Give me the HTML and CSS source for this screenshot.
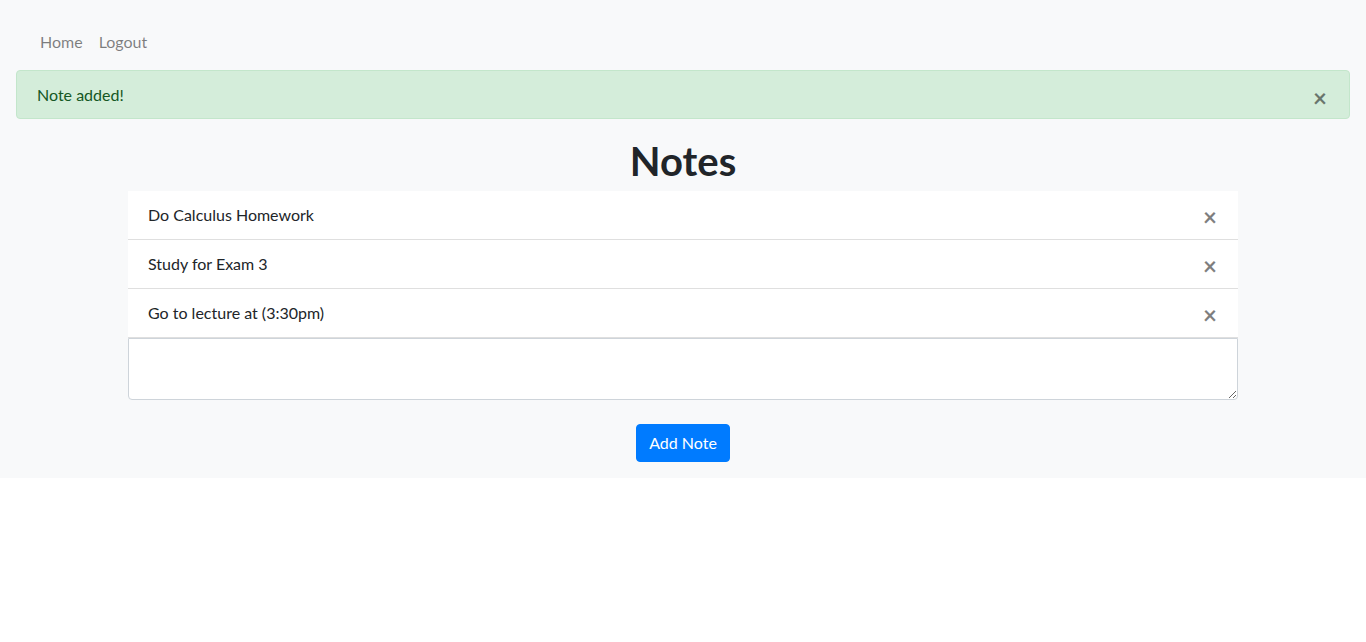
FILE: index.html
```html
<!DOCTYPE html>
<html lang="en">
<head>
<meta charset="utf-8">
<title>Notes</title>
<link rel="stylesheet" href="styles.css">
</head>
<body>
<div class="page">
  <nav class="navbar">
    <a class="nav-link" href="#">Home</a>
    <a class="nav-link" href="#">Logout</a>
  </nav>
  <div class="alert">
    <span>Note added!</span>
    <button class="close alert-close" type="button">&times;</button>
  </div>
  <main class="container">
    <h1 class="title">Notes</h1>
    <ul class="list">
      <li class="item"><span>Do Calculus Homework</span><button class="close" type="button">&times;</button></li>
      <li class="item"><span>Study for Exam 3</span><button class="close" type="button">&times;</button></li>
      <li class="item"><span>Go to lecture at (3:30pm)</span><button class="close" type="button">&times;</button></li>
    </ul>
    <textarea class="note-input" rows="2"></textarea>
    <div class="actions">
      <button class="btn" type="button">Add Note</button>
    </div>
  </main>
</div>
</body>
</html>
```
FILE: styles.css
```css
* { box-sizing: border-box; }
html, body { margin: 0; padding: 0; }
body {
  font-family: "Segoe UI", "Lato", "Noto Sans", sans-serif;
  font-size: 16px;
  line-height: 24px;
  color: #212529;
  background: #fff;
}
.page {
  background: #f8f9fa;
  padding-bottom: 16px;
}
.navbar {
  display: flex;
  padding: 22px 32px 8px;
}
.nav-link {
  padding: 8px;
  color: rgba(0,0,0,0.5);
  text-decoration: none;
}
.alert {
  margin: 0 16px 16px;
  padding: 11px 20px;
  height: 49px;
  background: #d4edda;
  border: 1px solid #c3e6cb;
  border-radius: 4px;
  color: #155724;
  display: flex;
  align-items: center;
  justify-content: space-between;
}
.close {
  background: none;
  border: 0;
  padding: 0;
  height: 24px;
  font-family: inherit;
  font-size: 24px;
  font-weight: 700;
  line-height: 24px;
  color: #000;
  opacity: 0.5;
  cursor: pointer;
}
.alert-close { margin-right: 2px; transform: translateY(3px); }
.container {
  width: 1110px;
  margin: 0 auto;
}
.title {
  margin: 0 0 6px;
  padding-top: 2px;
  text-align: center;
  font-size: 40px;
  line-height: 48px;
  font-weight: 700;
}
.list {
  list-style: none;
  margin: 0;
  padding: 0;
  background: #fff;
}
.item {
  display: flex;
  align-items: center;
  justify-content: space-between;
  padding: 12px 20px;
  border-bottom: 1px solid rgba(0,0,0,0.125);
  height: 49px;
}
.item .close { margin-right: 1px; transform: translateY(2px); }
.note-input {
  display: block;
  width: 100%;
  height: 62px;
  margin: 0;
  padding: 6px 12px;
  border: 1px solid #ced4da;
  border-radius: 0 0 4px 4px;
  font: inherit;
  background: #fff;
  resize: vertical;
}
.actions {
  display: flex;
  justify-content: center;
  margin-top: 24px;
}
.btn {
  background: #007bff;
  color: #fff;
  border: 1px solid #007bff;
  border-radius: 4px;
  padding: 6px 12px;
  font: inherit;
  line-height: 24px;
  height: 38px;
  width: 94px;
}
```
